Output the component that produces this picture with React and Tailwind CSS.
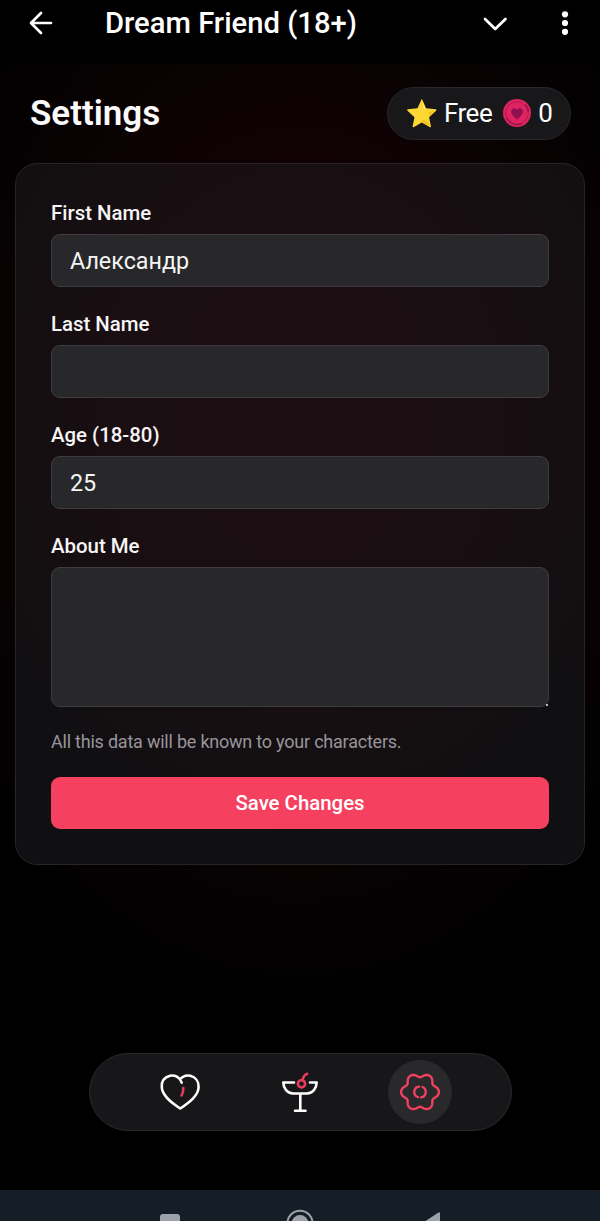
import React from 'react';

const gearPath = (() => {
  const pts = [];
  for (let i = 0; i < 144; i++) {
    const a = (i / 144) * Math.PI * 2;
    const r = 16.7 + 2 * Math.cos(6 * a) - 0.2 * Math.cos(12 * a);
    pts.push(`${(22 + 1.02 * r * Math.cos(a)).toFixed(2)} ${(22 + 1.02 * r * Math.sin(a)).toFixed(2)}`);
  }
  return `M${pts.join('L')}Z`;
})();

function TopBar() {
  return (
    <header className="flex h-16 items-start bg-black text-white">
      <div className="flex h-[46px] w-full items-center pl-[26px] pr-[26px]">
        <svg className="h-7 w-7 shrink-0" viewBox="0 0 28 28" fill="none" stroke="currentColor" strokeWidth="2.7" strokeLinecap="round" strokeLinejoin="round">
          <path d="M25 14H5M15 4L5 14l10 10" />
        </svg>
        <h1 className="ml-[51px] whitespace-nowrap pt-[2px] text-[29.200px] font-medium leading-none">Dream Friend (18+)</h1>
        <svg className="ml-auto h-7 w-7 shrink-0" viewBox="0 0 28 28" fill="none" stroke="currentColor" strokeWidth="2.7" strokeLinecap="round" strokeLinejoin="round">
          <path d="M4 10l10.200 10L24.500 10" />
        </svg>
        <svg className="ml-[47px] h-7 w-[18px] shrink-0" viewBox="0 0 18 28" fill="currentColor">
          <circle cx="9" cy="5.300" r="3.100" />
          <circle cx="9" cy="14" r="3.100" />
          <circle cx="9" cy="22.800" r="3.100" />
        </svg>
      </div>
    </header>
  );
}

function Balance() {
  return (
    <div className="flex h-[53px] w-[184px] items-center rounded-full border border-[#28282a] bg-[#18181a] pl-[18px] pb-px text-[26px] leading-none tracking-[-0.500px] text-white">
      <svg className="h-[30px] w-[31px] shrink-0" viewBox="0 0 31 30">
        <path d="M15.800.8l4.300 9.400 9.600 1.100c.8.100 1 .9.400 1.500l-7 6.500 1.900 9.200c.1.700-.4 1-1 .7L15.800 24.500l-8.200 4.700c-.6.300-1.100 0-1-.7l1.900-9.200-7-6.500c-.6-.6-.4-1.400.4-1.500l9.600-1.100z" fill="#fdd835" />
        <path d="M16.800 3.500l2.300 7.200c.2.600-.9.900-1.200.2z" fill="#fff59d" />
        <path d="M24.500 28.800L22 24l-6.200-3 0 3.500zM28.500 12l-6 2.500 1 4z" fill="#f4c020" />
      </svg>
      <span className="ml-[7px]">Free</span>
      <svg className="ml-[11px] h-7 w-7 shrink-0" viewBox="0 0 28 28">
        <circle cx="14" cy="14" r="14" fill="#de2460" />
        <circle cx="14" cy="14" r="11.300" fill="none" stroke="#b81a55" strokeWidth="1" />
        <path d="M3.500 18.500A11.500 11.500 0 0 0 19 24.500M22 5.500A11.500 11.500 0 0 1 25.500 13" fill="none" stroke="#a31350" strokeWidth="1.500" />
        <path d="M14 20.500C10.500 17.500 8.200 15.500 8.200 12.500c0-3.600 4.200-4.600 5.800-1.600 1.600-3 5.800-2 5.800 1.600 0 3-2.300 5-5.800 8z" fill="#90104f" />
      </svg>
      <span className="ml-[7px]">0</span>
    </div>
  );
}

function Field({ label, children }) {
  return (
    <div className="flex flex-col gap-[6px]">
      <span className="h-[30px] text-[20.400px] font-medium leading-[30px] text-[#f7f5f6]">{label}</span>
      {children}
    </div>
  );
}

function TextInput({ value }) {
  return (
    <div className="flex h-[53px] items-center rounded-[9px] border border-[#3e3c3e] bg-[#28282a] pl-[18px] pt-[2px] text-[23.300px] leading-none text-[#f5f5f5]">
      {value}
    </div>
  );
}

function SettingsCard() {
  return (
    <section className="mx-[15px] mt-[23px] flex h-[702px] flex-col rounded-[22px] border border-[#272426] bg-[radial-gradient(ellipse_360px_430px_at_50%_35%,#1b0e12_0%,#190e12_55%,#100f11_100%)] px-[35px] pt-[34px]">
      <div className="flex flex-col gap-[22px]">
        <Field label="First Name"><TextInput value="Александр" /></Field>
        <Field label="Last Name"><TextInput value="" /></Field>
        <Field label="Age (18-80)"><TextInput value="25" /></Field>
        <Field label="About Me">
          <div className="flex h-[140px] items-end justify-end rounded-[9px] border border-[#3e3c3e] bg-[#28282a]">
            <span className="h-[2px] w-[2px] bg-[#bbbbbb]" />
          </div>
        </Field>
      </div>
      <p className="mt-[21px] whitespace-nowrap text-[18px] leading-[27px] tracking-[-0.220px] text-[#98959a]">All this data will be known to your characters.</p>
      <button className="mt-[22px] h-[52px] w-full shrink-0 rounded-[9px] bg-[#f5415f] pt-px text-[20.400px] font-medium text-white">Save Changes</button>
    </section>
  );
}

function TabBar() {
  return (
    <nav className="mx-auto mt-[188px] flex h-[78px] w-[423px] shrink-0 items-center justify-between rounded-full border border-[#2a2a2c] bg-[#171719] pl-[58px] pr-[59px]">
      <div className="flex h-16 w-16 items-center justify-center">
        <svg className="h-11 w-11" viewBox="0 0 44 44" fill="none" strokeLinecap="round" strokeLinejoin="round">
          <path d="M23.700 12.700C21.800 7 16.600 4.700 12 5.800 6.500 7.200 3.300 11.500 3.800 17.500c.5 8 8.700 14.500 18.500 21 9.500-6.500 17.900-13 18.300-21 .3-6-3-10.400-8.300-11.700-4.400-1-8 .8-10.300 3.700" stroke="white" strokeWidth="2.600" />
          <path d="M25.300 18c.1 3-.4 5-1.700 7.500" stroke="#e63b5c" strokeWidth="2.600" />
        </svg>
      </div>
      <div className="flex h-16 w-16 items-center justify-center">
        <svg className="h-11 w-11" viewBox="0 0 44 44" fill="none" strokeLinecap="round" strokeLinejoin="round">
          <path d="M16 12.500H5.300C5.500 18 9 23.500 15 23.500H29C35 23.500 38.500 18 38.700 12.500H32M22.300 24V40M17 40.700h10.500" stroke="white" strokeWidth="2.600" />
          <circle cx="23.500" cy="13.800" r="3.600" stroke="#e63b5c" strokeWidth="2.600" />
          <path d="M24.500 9.800c.8-2.800 2.200-5 4.700-6" stroke="#e63b5c" strokeWidth="2.600" />
        </svg>
      </div>
      <div className="flex h-16 w-16 items-center justify-center rounded-full bg-[#29292b]">
        <svg className="h-11 w-11" viewBox="0 0 44 44" fill="none" stroke="#f0405f" strokeWidth="2.400" strokeLinecap="round" strokeLinejoin="round">
          <path d={gearPath} />
          <path d="M21 16.600C15 17.300 14.800 25.900 20 27.100M24.500 17C29 18.800 29 26.500 23 27.400" />
        </svg>
      </div>
    </nav>
  );
}

function SystemBar() {
  return (
    <footer className="mt-auto flex h-[31px] shrink-0 items-end justify-center gap-[106px] overflow-hidden bg-[#151e26]">
      <svg className="h-[31px] w-5" viewBox="0 0 20 31"><rect y="24" width="20" height="20" rx="3" fill="#9da2aa" /></svg>
      <svg className="h-[31px] w-7" viewBox="0 0 28 31">
        <circle cx="14" cy="33.500" r="12.700" fill="none" stroke="#9da2aa" strokeWidth="2" />
        <circle cx="14" cy="33.500" r="8.500" fill="#9da2aa" />
      </svg>
      <svg className="h-[31px] w-5" viewBox="0 0 20 31"><path d="M18.500 22.500Q20 21.500 20 23.500V31H5.500z" fill="#9da2aa" /></svg>
    </footer>
  );
}

export default function App() {
  return (
    <div className="flex h-[1221px] w-[600px] flex-col overflow-hidden bg-black font-[Roboto,sans-serif]">
      <TopBar />
      <main className="flex flex-1 flex-col bg-[radial-gradient(ellipse_420px_590px_at_50%_365px,#160308_0%,#110104_45%,#0a0203_65%,#000000_100%)]">
        <div className="flex h-[76px] items-end justify-between pl-[30px] pr-[29px]">
          <h2 className="mb-[8px] text-[35px] font-semibold leading-[37px] text-[#fdfafb]">Settings</h2>
          <Balance />
        </div>
        <SettingsCard />
        <TabBar />
      </main>
      <SystemBar />
    </div>
  );
}
